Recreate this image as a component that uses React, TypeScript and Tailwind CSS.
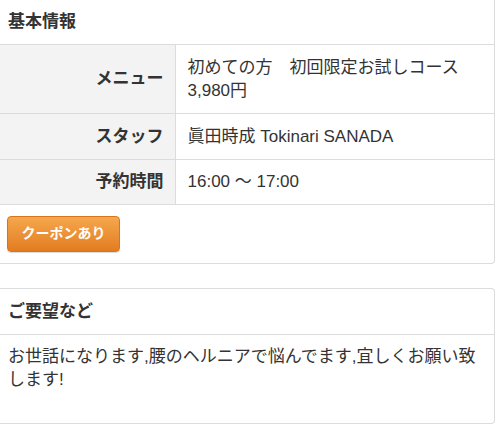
import type React from "react";

const font = { fontFamily: '"Liberation Sans", "Noto Sans CJK JP", sans-serif' };

const rows: { label: string; value: React.ReactNode; h: string }[] = [
  {
    label: "メニュー",
    value: (
      <>
        初めての方　初回限定お試しコース
        <br />
        3,980円
      </>
    ),
    h: "h-[68px]",
  },
  { label: "スタッフ", value: "眞田時成 Tokinari SANADA", h: "h-[46px]" },
  { label: "予約時間", value: "16:00 〜 17:00", h: "h-[45px]" },
];

export default function App() {
  return (
    <div
      className="w-[500px] h-[437px] overflow-hidden bg-white pr-[5px] text-[17px] leading-[23px] text-[#333]"
      style={font}
    >
      {/* 基本情報 */}
      <section className="border border-l-0 border-t-0 border-[#dcdcdc] rounded-br-[4px] bg-white">
        <h2 className="px-[8px] py-[11px] leading-[22px] font-bold border-b border-[#dcdcdc]">基本情報</h2>
        <table className="w-full border-collapse">
          <tbody>
            {rows.map((r) => (
              <tr key={r.label} className={`${r.h} border-b border-[#dcdcdc]`}>
                <th className="w-[175px] bg-[#f3f3f3] border-r border-[#dcdcdc] text-right font-bold pr-[11px] py-0 align-middle">
                  {r.label}
                </th>
                <td className="px-[12px] py-0 font-normal align-middle">{r.value}</td>
              </tr>
            ))}
          </tbody>
        </table>
        <div className="px-[7px] py-[11px]">
          <button className="h-[36px] w-[113px] rounded-[4px] border border-[#d8741c] bg-gradient-to-b from-[#f6a74c] to-[#e27c1f] text-white font-bold text-[14px] shadow-[0_1px_1px_rgba(0,0,0,0.15)]">
            クーポンあり
          </button>
        </div>
      </section>

      {/* ご要望など */}
      <section className="mt-[24px] border border-l-0 border-[#dcdcdc] rounded-r-[4px] bg-white">
        <h2 className="px-[8px] py-[11px] leading-[23px] font-bold border-b border-[#dcdcdc]">ご要望など</h2>
        <p className="px-[8px] pt-[10px] pb-[32px]">
          お世話になります,腰のヘルニアで悩んでます,宜しくお願い致します!
        </p>
      </section>
    </div>
  );
}
